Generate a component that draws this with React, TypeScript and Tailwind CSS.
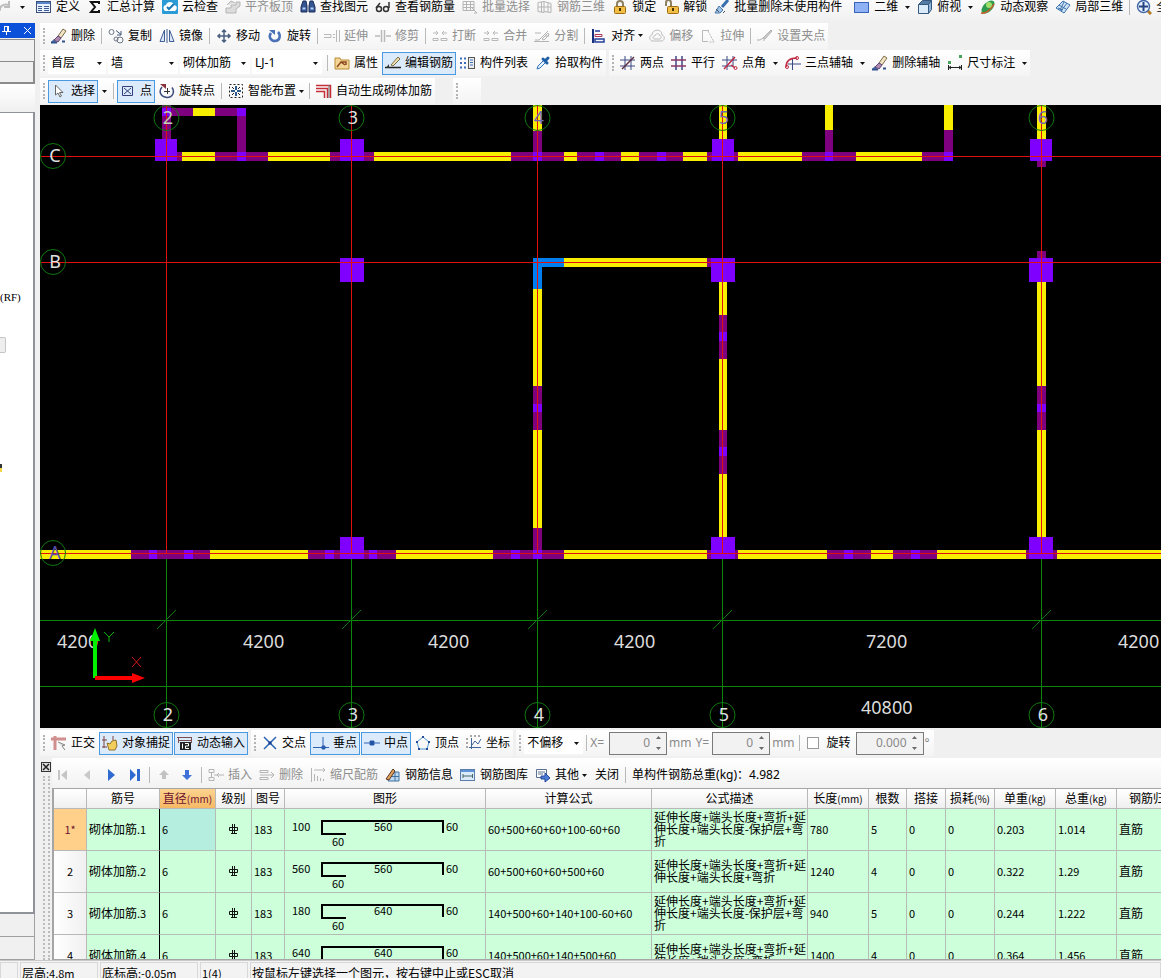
import type { ReactNode } from "react";

// 16x16 toolbar drawings
const icons: Record<string, ReactNode> = {
  redo: <path d="M0 12c-1-4 3-8 9-6M9 2v6h-5" fill="none" stroke="#bdbdbd" strokeWidth="2" />,
  define: (
    <g>
      <rect x="0.5" y="2.5" width="14" height="11" fill="#eaf3ff" stroke="#3c4f78" />
      <path d="M1 4h13" stroke="#5b86c8" strokeWidth="2" />
      <path d="M2 7.5h4M2 9.5h4M2 11.5h4M8 7.5h5M8 9.5h5M8 11.5h5" stroke="#3c5a94" />
    </g>
  ),
  sum: <path d="M12 5V3H4l4 5-4 5h8v-2" fill="none" stroke="#111" strokeWidth="2" />,
  cloudCheck: (
    <g>
      <rect width="16" height="15" rx="1" fill="#2a9bd4" />
      <path d="M3 12c-3-3-1-6 1-6 1-4 7-4 8 0 3 0 4 4 1 6z" fill="#fff" />
      <path d="M5 8l2 2 5-5" fill="none" stroke="#1879b5" strokeWidth="2" />
    </g>
  ),
  flush: <path d="M1 14V9h5v-3h5V3h4v4l-4 3v4zM2 6l4-4 4 2" fill="#dcdcdc" stroke="#b5b5b5" />,
  find: (
    <g fill="#35558f" stroke="#1b2f5c">
      <path d="M3 2h3l1 5v6H1V8zM10 2h3l2 6v5H9V7z" />
      <path d="M2.5 9.5h3M10.5 9.5h3" stroke="#b8d2ff" strokeWidth="2" />
    </g>
  ),
  glasses: (
    <g fill="none" stroke="#333" strokeWidth="1.5">
      <circle cx="4" cy="10" r="2.5" />
      <circle cx="11" cy="10" r="2.5" />
      <path d="M1 9l4-5M14 9V3" />
    </g>
  ),
  batch: <path d="M1 2.5h11v9H1zM1 5.5h11M1 8.5h11M4.5 2v10M8.5 2v10M9 8l6 6-3 0" fill="none" stroke="#b4b4b4" />,
  grid3d: <path d="M1 3.5l6-1v11l-6-1zM7 2.5l7 2v9l-7-1M1 8h13M4.5 3v10M11 4v9" fill="none" stroke="#b4b4b4" />,
  lock: (
    <g>
      <path d="M5 8V5c0-4 6-4 6 0v3" fill="none" stroke="#8d8060" strokeWidth="2" />
      <rect x="2.5" y="7.5" width="11" height="7" rx="1" fill="#f1bf45" stroke="#a06d13" />
      <path d="M8 9v3" stroke="#4a3100" strokeWidth="2" />
    </g>
  ),
  unlock: (
    <g>
      <path d="M3 7V4c0-4 5-4 5 0v4" fill="none" stroke="#8d8060" strokeWidth="2" />
      <rect x="4.5" y="7.5" width="11" height="7" rx="1" fill="#f1bf45" stroke="#a06d13" />
      <path d="M10 9v3" stroke="#4a3100" strokeWidth="2" />
    </g>
  ),
  broom: (
    <g>
      <path d="M14 1L8 8" stroke="#3a6fae" strokeWidth="3" />
      <path d="M5 7l4 4-3 3-5 0z" fill="#9fc4ea" stroke="#4c78a8" />
      <path d="M2 10l3 3M9 14l2-2" stroke="#4a545f" />
    </g>
  ),
  plane: <rect x="0.5" y="3.5" width="14" height="10" fill="#8fb2f5" stroke="#3763b8" />,
  cube: (
    <g stroke="#35587e">
      <path d="M1.5 5.5l4-4h9l-3 4z" fill="#557ba5" />
      <path d="M11.5 5.5l3-4v9l-3 4z" fill="#8fb4d9" />
      <path d="M1.5 5.5h10v9h-10z" fill="#d9eafa" />
    </g>
  ),
  orbit: (
    <g>
      <ellipse cx="8" cy="8" rx="8" ry="4.5" transform="rotate(-45 8 8)" fill="#2d9a4d" />
      <circle cx="9" cy="6" r="3" fill="#9fe06b" />
      <path d="M1 14c4 1 10-3 13-9" fill="none" stroke="#d05a2a" strokeWidth="1.5" />
    </g>
  ),
  part3d: (
    <g fill="#cfe4f7" stroke="#3b71a8">
      <path d="M1 9l7-7 7 4-6 8z" />
      <path d="M4 6l7 4M6 12l6-8M3 9l5 2M9 3l-4 8" fill="none" />
    </g>
  ),
  zoomAll: (
    <g>
      <path d="M11 11l4 4" stroke="#b57b25" strokeWidth="3" />
      <circle cx="7.5" cy="7.5" r="6" fill="#e6f1ff" stroke="#4268a8" strokeWidth="1.5" />
      <path d="M7.5 3v9M3 7.5h9" stroke="#24457f" strokeWidth="2" />
    </g>
  ),
  eraser: (
    <g>
      <path d="M0 14l3-3 2 3z" fill="#4f6fa8" />
      <path d="M0 14.5h6M11 13.500h3" stroke="#31508c" strokeWidth="2" />
      <path d="M7 8l5-7 3 2-5 7z" fill="#f0e4c4" stroke="#7c6b46" />
      <path d="M7 8l3 2-3 4-4-2z" fill="#b089b0" stroke="#5c4878" />
    </g>
  ),
  copy: (
    <g fill="none" stroke="#6d7785">
      <circle cx="3.5" cy="4" r="2.5" />
      <circle cx="12" cy="12" r="3" />
      <circle cx="8" cy="11" r="2" />
      <path d="M8 2.5l5 4M13 3v4h-4" stroke="#3e5575" />
    </g>
  ),
  mirror: (
    <g fill="#dce8f8" stroke="#3f5f96">
      <path d="M5.5 2v11.500H1zM10.500 2v11.500h4.500z" />
      <path d="M8 1v14" strokeWidth="1" />
    </g>
  ),
  move: <path d="M8 2v12M2 8h12M6 4l2-2 2 2M6 12l2 2 2-2M4 6L2 8l2 2M12 6l2 2-2 2" fill="none" stroke="#4a6080" strokeWidth="1.5" />,
  rotate: (
    <g>
      <path d="M4 5c-3 4 0 8 4 8 5 0 6-6 3-9" fill="none" stroke="#4a70b8" strokeWidth="2.5" />
      <path d="M2 2h6v5z" fill="#4a70b8" />
    </g>
  ),
  extend: <path d="M0 6.5h7v3H0M9 6.500h2M9 9.500h2M12.500 2v12M15.500 2v12" fill="none" stroke="#b9b9b9" />,
  trim: <path d="M0 8h5M6.500 2v12M9.500 2v12M11 8h5" fill="none" stroke="#b9b9b9" strokeWidth="1.5" />,
  breakAt: <path d="M1 5h5M4 3l2 2-2 2M15 5h-5M12 3l-2 2 2 2M1 10.500h5v2H1zM9 10.500h6v2H9z" fill="none" stroke="#b9b9b9" />,
  split: <path d="M1 12h4l9-9M1 5h6M0 13.500h15M11 8h4M8 11l6-6 1 2-5 5z" fill="none" stroke="#b4b4b4" />,
  align: (
    <g fill="none">
      <path d="M2 1v14" stroke="#17307c" strokeWidth="2" />
      <path d="M4 6.500h7v2H4z" stroke="#b03a5a" />
      <path d="M4 11h9v3H4zM4 3h5" stroke="#25409a" strokeWidth="1.5" />
    </g>
  ),
  offset: (
    <g fill="none" stroke="#bcbcbc">
      <path d="M3 13c-4-2-2-6 0-6 0-6 10-7 10 0 3 1 3 5 0 6z" />
      <path d="M5 11c-2-1-1-3 1-3 0-3 5-3 5 0 1 0 2 2 0 3z" />
    </g>
  ),
  stretch: (
    <g fill="none" stroke="#b9b9b9">
      <path d="M9 2.500H2.500v11H8" />
      <path d="M8 3l6 11H9" strokeDasharray="2 1" />
    </g>
  ),
  grip: <path d="M0 12h3M6 12h2M3 12l3-2M6 10l8-8 1 1-7 8z" fill="#ccc" stroke="#b0b0b0" />,
  prop: (
    <g>
      <path d="M1 3h5l1 2h8v9H1z" fill="#f4d797" stroke="#b98c35" />
      <path d="M3 12l4-5 4 3M7 7h5v3" fill="none" stroke="#8f4a21" strokeWidth="1.5" />
    </g>
  ),
  edit: (
    <g>
      <path d="M0 12.500h16" stroke="#222" strokeWidth="1.5" />
      <path d="M1 13l3-4v4" fill="#333" />
      <path d="M6 10l7-8 2 2-7 7z" fill="#f0e3b2" stroke="#7a6a42" />
    </g>
  ),
  list: (
    <g>
      <path d="M0 3.500h2M4 3.500h2M0 8h2M4 8h2M0 12.500h2M4 12.500h2" stroke="#3a6dbb" strokeWidth="2" />
      <rect x="8.5" y="2.5" width="6" height="11" fill="#eee" stroke="#555" />
      <path d="M10 5h3M10 7.500h3M10 10h3" stroke="#3a6dbb" />
    </g>
  ),
  pick: (
    <g>
      <path d="M2 14l1-3 6-6 2 2-6 6z" fill="#e6f3ff" stroke="#2f74ba" />
      <path d="M8 4l4 4M10 6l3-3" stroke="#1e5fa8" strokeWidth="3" strokeLinecap="round" />
    </g>
  ),
  twoPoint: (
    <g>
      <path d="M5 1v14M11 1v14M0 5h15M0 11h15" stroke="#3b4a86" />
      <path d="M2 14L14 2" stroke="#5d2f3c" strokeWidth="1.5" />
    </g>
  ),
  parallel: (
    <g>
      <path d="M5 1v14M11 1v14" stroke="#3b4a86" strokeWidth="1.5" />
      <path d="M0 5h15M0 11h15" stroke="#8e3566" strokeWidth="1.5" />
    </g>
  ),
  pointAngle: (
    <g>
      <path d="M5 1v14M11 1v10M0 5h15M0 11h11" stroke="#3b4a86" />
      <path d="M2 14L13 2M9 10l4 3" stroke="#c02a44" strokeWidth="1.5" />
      <circle cx="13.5" cy="13" r="1.5" fill="none" stroke="#c02a44" />
    </g>
  ),
  threePoint: (
    <g fill="none">
      <path d="M7.500 3v12M3 9h13" stroke="#3b4a86" />
      <path d="M1 12c0-6 4-9 11-9" stroke="#c02a44" strokeWidth="1.5" />
      <circle cx="2" cy="12" r="1.5" stroke="#c02a44" />
      <circle cx="12" cy="3" r="1.5" stroke="#c02a44" />
    </g>
  ),
  dimension: (
    <g>
      <path d="M1.500 10v5M14.500 10v5M2 12.500h12M4 11l-2 1.500 2 1.500M12 11l2 1.500-2 1.500" fill="none" stroke="#222" />
      <path d="M1 6h3v3H1zM12 0h3v3h-3z" fill="#4aa35a" />
    </g>
  ),
  cursor: <path d="M4.500 2v10l2.500-2 2 4 1.500-1-2-3.500H12z" fill="#fff" stroke="#666" />,
  point: <path d="M2.500 3.500h10v9h-10zM4 5l7 6M11 5l-7 6" fill="none" stroke="#31407a" />,
  rotatePoint: (
    <g fill="none">
      <path d="M3 4c-4 5-1 10 5 10.500 6 0 8-6 5-10" stroke="#3c4d7c" strokeWidth="1.5" />
      <path d="M8.500 5v6M5 8.500h6" stroke="#333" />
      <path d="M1 1h6v5z" fill="#8a3340" />
    </g>
  ),
  smart: (
    <g fill="none">
      <rect x="1.5" y="1.5" width="13" height="13" stroke="#222" strokeDasharray="2 2" />
      <path d="M8 3v4M8 9v4M3 8h4M9 8h4" stroke="#2d5c8d" strokeWidth="2" />
      <path d="M4 4l2 2M12 4l-2 2M4 12l2-2M12 12l-2-2" stroke="#222" />
    </g>
  ),
  autoRebar: (
    <g fill="none" stroke="#c42f38">
      <path d="M0 2.500h14.500V15M0 5.500h11.500V15M0 8.500h8.500V15" strokeWidth="1.5" />
      <path d="M13 2v13" stroke="#6e6e6e" />
    </g>
  ),
  ortho: (
    <g>
      <path d="M0 4h15M4 1v14" stroke="#d08e8e" strokeWidth="3" />
      <path d="M7 7l7 3-3 1 3 4" fill="#ddd" stroke="#888" />
    </g>
  ),
  snap: (
    <g>
      <path d="M2 1v12M0 5h5M11 1v4M0 12h5" stroke="#7c4040" />
      <path d="M5 8l3 1 2-3 4-1 1 6-2 4H7z" fill="#f2cf5c" stroke="#93702a" />
    </g>
  ),
  dynInput: (
    <g>
      <path d="M0 2.500h15M1.500 2v6M14.500 2v6M1 5.500h14" stroke="#7c4d4d" />
      <rect x="3" y="7" width="11" height="8" fill="#222" />
      <path d="M5.500 8.500v5M8 8.500h3.500V11H8.500v2.500H12" fill="none" stroke="#fff" />
    </g>
  ),
  cross: (
    <g>
      <path d="M2 2l12 12M14 2L2 14" stroke="#2b66b5" strokeWidth="1.5" />
      <rect x="6.5" y="6.5" width="3" height="3" fill="#173f8e" />
    </g>
  ),
  foot: <path d="M0 12.500h16M10 2v10M9 11h3v3H9z" fill="#173f8e" stroke="#2e62b5" />,
  mid: <path d="M0 8h16M6 6h4v4H6z" fill="#173f8e" stroke="#2e62b5" />,
  vertex: (
    <g>
      <path d="M8 2l6 5-2 7H4L2 7z" fill="none" stroke="#5596ce" />
      <path d="M7 1h2v2H7zM1 6h2v2H1zM13 6h2v2h-2zM3 13h2v2H3zM11 13h2v2h-2z" fill="#244c94" />
    </g>
  ),
  coord: (
    <g fill="none" stroke="#40659c">
      <path d="M5.500 3v11M3 12.500h12M6 10l3-4 3 3 3-5" />
      <path d="M1 3v10M4 1h12" strokeDasharray="2 2" stroke="#555" />
    </g>
  ),
  first: <path d="M3 3h2v10H3zM12 3v10L6 8z" fill="#c5c5c5" />,
  prev: <path d="M11 3v10L5 8z" fill="#c9c9c9" />,
  next: <path d="M5 2v12l7-6z" fill="#2f6ad0" />,
  last: <path d="M3 2v12l6-6zM10 2h3v12h-3z" fill="#2f6ad0" />,
  up: <path d="M8 3l5 5h-3v4H6V8H3z" fill="#c2c2c2" />,
  down: <path d="M8 13l5-5h-3V3H6v5H3z" fill="#3f72d8" />,
  insert: <path d="M1 2.500h5v3H1zM1 10.500h5v3H1zM9 8h7M11 6L9 8l2 2M3.500 6v4M6 8h3" fill="none" stroke="#b5b5b5" />,
  remove: <path d="M1 3.500h8v2H1zM1 10.500h8v2H1zM1 8h14M12 5l3 3-3 3" fill="none" stroke="#b5b5b5" />,
  scale: <path d="M1.500 1v14M4 3h11M13 1l2 2-2 2M4.500 7v7M7.500 9v5M10.500 11v3M13.500 12v2" fill="none" stroke="#b5b5b5" />,
  info: (
    <g>
      <path d="M6 5h8v9H3z" fill="#bcd8f2" stroke="#42729f" />
      <path d="M10 5v9M5 9.500h9" stroke="#42729f" />
      <path d="M1 12l7-10 2 2-6 9z" fill="#e3a05a" stroke="#5a3925" />
    </g>
  ),
  library: (
    <g>
      <rect x="0.5" y="2.5" width="14" height="11" fill="#dcebfa" stroke="#5b7dab" />
      <path d="M1 4h13" stroke="#5d92d6" strokeWidth="2" />
      <path d="M3 7v4M12.500 7v4M3 9h9" stroke="#446666" />
    </g>
  ),
  other: (
    <g>
      <path d="M1.500 2.500h10v8h-10zM3 5h7M3 7h5" fill="#fff" stroke="#5a7195" />
      <path d="M6 9h4V6l5 5-5 4v-3H6z" fill="#4b7bd6" stroke="#24479a" />
    </g>
  ),
};

function Icon({ name }: { name: string }) {
  return (
    <svg viewBox="0 0 16 16" className="size-4 shrink-0" aria-hidden="true">
      {icons[name]}
    </svg>
  );
}

function Caret() {
  return (
    <svg viewBox="0 0 5 3" className="h-[3px] w-[5px] shrink-0" aria-hidden="true">
      <path d="M0 0h5L2.500 3z" fill="#111" />
    </svg>
  );
}

type ToolProps = { icon?: string; label?: string; title?: string; off?: boolean; active?: boolean; menu?: boolean; split?: boolean };

function Tool({ icon, label, title, off, active, menu, split }: ToolProps) {
  const box = active ? "border-[#4a98e0] bg-[#dcebfb]" : "border-transparent";
  return (
    <div className="flex shrink-0 items-center">
      <button disabled={off} title={title} aria-label={label ?? title} className={"flex h-[23px] items-center gap-1 border px-[2px] " + box}>
        {icon && <Icon name={icon} />}
        {label && <span className={off ? "text-[#8f8f8f]" : ""}>{label}</span>}
      </button>
      {menu && <Caret />}
      {split && (
        <button className="flex h-4 items-center pr-[3px] pl-1" aria-label={label + "选项"}>
          <Caret />
        </button>
      )}
    </div>
  );
}

function Bar({ children }: { children?: ReactNode }) {
  return (
    <div role="toolbar" className="flex h-[26px] shrink-0 items-center gap-px bg-linear-to-b from-white to-[#f4f4f4]">
      <span className="flex h-4 w-[7px] shrink-0 justify-center">
        <span className="border-l-2 border-dotted border-[#b4b4b4]" />
      </span>
      {children}
    </div>
  );
}

function Sep() {
  return <span className="mx-[2px] h-4 w-px shrink-0 bg-[#b9b9b9]" />;
}

function Combo({ value, label, width }: { value: string; label: string; width: string }) {
  return (
    <div className={"relative flex h-[22px] shrink-0 items-center bg-white " + width}>
      <select aria-label={label} className="h-full w-full appearance-none pl-[3px] leading-4 outline-none">
        <option>{value}</option>
      </select>
      <span className="pointer-events-none absolute right-1 flex">
        <Caret />
      </span>
    </div>
  );
}

function Spin({ label, value, width }: { label: string; value: string; width: string }) {
  return (
    <div className={"flex h-[23px] shrink-0 border border-[#7a7a7a] bg-[#f2f2f2] text-[#8a8a8a] " + width}>
      <input aria-label={label} defaultValue={value} className="w-full min-w-0 text-right outline-none" />
      <div className="flex w-4 shrink-0 flex-col items-center justify-around">
        <button aria-label="增加" className="rotate-180 opacity-60">
          <Caret />
        </button>
        <button aria-label="减少" className="opacity-60">
          <Caret />
        </button>
      </div>
    </div>
  );
}

const Y = "#f7ee00";
const P = "#7f007f";
const V = "#7f00ff";
const B = "#0080f0";

// wall pieces: x, y, width, height, colour
const walls: [number, number, number, number, string][] = [
  [162, 105, 9, 47, P], [162, 108, 9, 8, V], [171, 108, 22, 8, P], [193, 108, 22, 8, Y], [215, 108, 22, 8, P], [237, 116, 9, 36, P], [237, 108, 9, 8, V],
  [177, 152, 5, 9, P], [182, 152, 33, 9, Y], [215, 152, 53, 9, P], [237, 152, 9, 9, V], [268, 152, 62, 9, Y], [330, 152, 44, 9, P], [374, 152, 137, 9, Y],
  [511, 152, 53, 9, P], [564, 152, 13, 9, Y], [577, 152, 44, 9, P], [595, 152, 9, 9, V], [621, 152, 18, 9, Y], [639, 152, 44, 9, P], [657, 152, 9, 9, V],
  [683, 152, 24, 9, Y], [707, 152, 31, 9, P], [738, 152, 64, 9, Y], [802, 152, 54, 9, P], [856, 152, 66, 9, Y], [922, 152, 22, 9, P], [944, 152, 9, 9, V],
  [533, 105, 9, 26, Y], [533, 131, 9, 21, P], [533, 152, 9, 9, V], [719, 105, 8, 34, Y], [825, 105, 8, 25, Y], [825, 130, 8, 22, P], [825, 152, 8, 9, V],
  [944, 105, 9, 25, Y], [944, 130, 9, 22, P], [1037, 105, 9, 34, Y], [1037, 161, 9, 6, P],
  [533, 258, 9, 31, B], [542, 258, 22, 9, B], [564, 258, 143, 9, Y], [707, 258, 4, 9, P],
  [533, 289, 9, 97, Y], [533, 386, 9, 44, P], [533, 404, 9, 8, V], [533, 430, 9, 98, Y], [533, 528, 9, 22, P],
  [719, 282, 8, 33, Y], [719, 315, 8, 44, P], [719, 332, 8, 9, V], [719, 359, 8, 71, Y], [719, 430, 8, 44, P], [719, 447, 8, 9, V], [719, 474, 8, 63, Y],
  [1037, 251, 9, 7, P], [1037, 282, 9, 104, Y], [1037, 386, 9, 44, P], [1037, 404, 9, 8, V], [1037, 430, 9, 107, Y],
  [40, 550, 91, 9, Y], [131, 550, 79, 9, P], [149, 550, 8, 9, V], [184, 550, 9, 9, V], [210, 550, 98, 9, Y], [308, 550, 88, 9, P], [325, 550, 9, 9, V], [369, 550, 8, 9, V],
  [396, 550, 97, 9, Y], [493, 550, 71, 9, P], [511, 550, 9, 9, V], [533, 550, 9, 9, V], [564, 550, 143, 9, Y], [707, 550, 31, 9, P], [738, 550, 89, 9, Y],
  [827, 550, 44, 9, P], [844, 550, 9, 9, V], [871, 550, 22, 9, Y], [893, 550, 44, 9, P], [911, 550, 9, 9, V], [937, 550, 89, 9, Y], [1026, 550, 31, 9, P], [1057, 550, 104, 9, Y],
  // columns
  [155, 139, 22, 22, V], [340, 139, 24, 22, V], [712, 139, 22, 22, V], [1030, 139, 22, 22, V],
  [340, 258, 24, 24, V], [711, 258, 24, 24, V], [1029, 258, 24, 24, V],
  [340, 537, 24, 22, V], [711, 537, 24, 22, V], [1029, 537, 24, 22, V],
];

const axes = [
  { n: "2", x: 166, top: "#b9d3b9" },
  { n: "3", x: 351, top: "#e0e0e0" },
  { n: "4", x: 537, top: "#6a66b8" },
  { n: "5", x: 722, top: "#6a66b8" },
  { n: "6", x: 1041, top: "#6a66b8" },
];
const rowAxes = [
  { n: "C", y: 156, c: "#e0e0e0" },
  { n: "B", y: 262, c: "#e0e0e0" },
  { n: "A", y: 553, c: "#5b4fae" },
];
const dims: [string, number, number][] = [
  ["4200", 57, 648], ["4200", 243, 648], ["4200", 428, 648], ["4200", 614, 648], ["7200", 866, 648], ["4200", 1118, 648], ["40800", 861, 714],
];

function Plan() {
  return (
    <svg className="h-full w-full font-['Noto_Sans',sans-serif] text-[18px]" aria-label="平面图">
      <g transform="translate(-40 -105)">
        {walls.map(([x, y, w, h, c], i) => (
          <rect key={i} x={x} y={y} width={w} height={h} fill={c} shapeRendering="crispEdges" />
        ))}
        {/* grid lines */}
        <g shapeRendering="crispEdges">
          {axes.map((a) => (
            <g key={a.n}>
              <rect x={a.x} y="105" width="1" height="449" fill="#e01010" />
              <rect x={a.x} y="559" width="1" height="169" fill="#0b860b" />
            </g>
          ))}
          {rowAxes.map((a) => (
            <rect key={a.n} x="40" y={a.y} width="3000" height="1" fill="#e01010" />
          ))}
          <rect x="40" y="620" width="3000" height="1" fill="#0b860b" />
          <rect x="40" y="686" width="3000" height="1" fill="#0b860b" />
        </g>
        {axes.map((a) => (
          <g key={a.n} fill="none" stroke="#0f780f">
            <path d={`M${a.x - 9} 629l19-19`} />
            <circle cx={a.x + 0.5} cy="118" r="12.5" />
            <circle cx={a.x + 0.5} cy="715" r="12.5" />
          </g>
        ))}
        {rowAxes.map((a) => (
          <circle key={a.n} cx="53" cy={a.y} r="12.5" fill="none" stroke="#0f780f" />
        ))}
        <g textAnchor="middle">
          {axes.map((a) => (
            <g key={a.n}>
              <text x={a.x + 2} y="124" fill={a.top}>{a.n}</text>
              <text x={a.x + 2} y="721" fill="#e0e0e0">{a.n}</text>
            </g>
          ))}
          {rowAxes.map((a) => (
            <text key={a.n} x="55" y={a.y + 6} fill={a.c}>{a.n}</text>
          ))}
        </g>
        {dims.map(([t, x, y], i) => (
          <text key={i} x={x} y={y} fill="#dcdcdc">{t}</text>
        ))}
        <path d="M93 678V641h-3l5-13 5 13h-3v37z" fill="#00f000" />
        <path d="M95 676h37v-3l13 5-13 5v-3H95z" fill="#f00" />
        <path d="M104 632l5 5 5-5M109 637v5" fill="none" stroke="#0fb50f" />
        <path d="M132 657l9 10M141 657l-9 10" fill="none" stroke="#d01818" />
      </g>
    </svg>
  );
}

const columns = [
  { name: "", unit: "", w: "w-[33px]" },
  { name: "筋号", unit: "", w: "w-[73px]" },
  { name: "直径", unit: "(mm)", w: "w-[56px]" },
  { name: "级别", unit: "", w: "w-[36px]" },
  { name: "图号", unit: "", w: "w-[33px]" },
  { name: "图形", unit: "", w: "w-[201px]" },
  { name: "计算公式", unit: "", w: "w-[166px]" },
  { name: "公式描述", unit: "", w: "w-[156px]" },
  { name: "长度", unit: "(mm)", w: "w-[61px]" },
  { name: "根数", unit: "", w: "w-[38px]" },
  { name: "搭接", unit: "", w: "w-[39px]" },
  { name: "损耗", unit: "(%)", w: "w-[49px]" },
  { name: "单重", unit: "(kg)", w: "w-[61px]" },
  { name: "总重", unit: "(kg)", w: "w-[61px]" },
  { name: "钢筋归类", unit: "", w: "w-[73px]" },
];

const longDesc = ["延伸长度+端头长度+弯折+延", "伸长度+端头长度-保护层+弯", "折"];
const shortDesc = ["延伸长度+端头长度+弯折+延", "伸长度+端头长度+弯折"];

const bars = [
  { id: "1*", left: "100", mid: "560", formula: "60+500+60+60+100-60+60", desc: longDesc, nums: ["780", "5", "0", "0", "0.203", "1.014"] },
  { id: "2", left: "560", mid: "560", formula: "60+500+60+60+500+60", desc: shortDesc, nums: ["1240", "4", "0", "0", "0.322", "1.29"] },
  { id: "3", left: "180", mid: "640", formula: "140+500+60+140+100-60+60", desc: longDesc, nums: ["940", "5", "0", "0", "0.244", "1.222"] },
  { id: "4", left: "640", mid: "640", formula: "140+500+60+140+500+60", desc: shortDesc, nums: ["1400", "4", "0", "0", "0.364", "1.456"] },
];

function BarShape({ left, mid }: { left: string; mid: string }) {
  return (
    <svg className="block h-[41px] w-[200px]" aria-label="钢筋图形">
      <path d="M61 25H37V12H158V24" fill="none" stroke="#000" strokeWidth="2" />
      <text x="7" y="22">{left}</text>
      <text x="89" y="22">{mid}</text>
      <text x="161" y="22">60</text>
      <text x="47" y="37">60</text>
    </svg>
  );
}

function BarTable() {
  const line = "border-r border-b border-[#b3bdb5] ";
  const cell = line + "px-[2px] pt-0 pb-[2px]";
  return (
    <table className="w-[1136px] table-fixed border-separate border-spacing-0 bg-[#ccffda] font-['Noto_Sans_CJK_SC',sans-serif] text-[11px] leading-3">
      <thead>
        <tr className="h-5 bg-linear-to-b from-white to-[#eeeeee] text-xs leading-4">
          {columns.map((c) => (
            <th
              key={c.name}
              className={
                "border-r border-b border-[#b8b8b8] p-0 font-normal whitespace-nowrap " + c.w + (c.name === "直径" ? " bg-linear-to-b from-[#fbd38f] to-[#f5b964] text-[#6b1030]" : "")
              }
            >
              {c.name}
              <span className="text-[10px]">{c.unit}</span>
            </th>
          ))}
        </tr>
      </thead>
      <tbody>
        {bars.map((b, i) => (
          <tr key={b.id} className="h-[42px]">
            <th className={"border-r border-b border-[#b8b8b8] p-0 pb-[2px] font-normal " + (i === 0 ? "bg-[#ffd08a] text-[#6b1030]" : "bg-linear-to-r from-white to-[#f0f0f0]")}>{b.id}</th>
            <td className={cell + " border-r-black text-xs whitespace-nowrap"}>
              砌体加筋<span className="text-[11px]">.{i + 1}</span>
            </td>
            <td className={cell + (i === 0 ? " bg-[#b5eede]" : "")}>6</td>
            <td className={cell}>
              <svg className="mx-auto size-[10px]" viewBox="0 0 10 10" aria-label="三级钢">
                <path d="M0.500 3.500h8v3h-8zM3.500 0v9M5.500 0v9M2 9.500h6" fill="none" stroke="#111" />
              </svg>
            </td>
            <td className={cell}>183</td>
            <td className={line + "p-0"}>
              <BarShape left={b.left} mid={b.mid} />
            </td>
            <td className={cell}>{b.formula}</td>
            <td className={cell + " overflow-hidden text-xs leading-3 whitespace-nowrap"}>
              {b.desc.map((d) => (
                <div key={d}>{d}</div>
              ))}
            </td>
            {b.nums.map((n, k) => (
              <td key={k} className={cell}>{n}</td>
            ))}
            <td className={cell + " text-xs"}>直筋</td>
          </tr>
        ))}
      </tbody>
    </table>
  );
}

function SidePanel() {
  return (
    <aside className="flex w-[35px] shrink-0 flex-col overflow-hidden pt-px">
      <div className="flex h-[15px] shrink-0 items-center justify-end gap-3 bg-[#0a50d8] pr-[3px]">
        <button aria-label="固定">
          <svg viewBox="0 0 9 9" className="size-[9px]">
            <path d="M2 .500h4M2.500 0v5M5.500 0v5M6.500 0v5M0 5.500h9M4.500 5v4" fill="none" stroke="#fff" />
          </svg>
        </button>
        <button aria-label="关闭面板">
          <svg viewBox="0 0 9 9" className="size-[9px]">
            <path d="M1 1l7 7M8 1L1 8" stroke="#fff" />
          </svg>
        </button>
      </div>
      <div className="mt-px h-[22px] shrink-0 border-t border-r border-[#8c8c8c] bg-[#f0f0f0]" />
      <div className="h-[23px] shrink-0 border-t border-r-2 border-b-2 border-[#8c8c8c] bg-[#f0f0f0]" />
      <div className="h-7 shrink-0 bg-linear-to-b from-white to-[#f0f0f0]" />
      <div className="flex-1 overflow-hidden border-t border-r-2 border-b-2 border-[#8f9399] bg-white pt-[176px] font-['Liberation_Serif',serif] text-[11px]">
        <p className="leading-4">(RF)</p>
        <div className="mt-8 h-4 w-[6px] rounded-r-xs border border-l-0 border-[#c4c4c4] bg-[#eeeeee]" />
        <div className="mt-[111px] h-2 w-[2px] border-t-4 border-[#333] bg-[#f2d64a]" />
      </div>
      <div className="h-[23px] shrink-0 border-r border-b border-[#a0a0a0]" />
      <div className="h-[23px] shrink-0 border-r border-b border-[#a0a0a0]" />
    </aside>
  );
}

export default function App() {
  return (
    <div className="flex h-screen flex-col overflow-hidden bg-[#f0f0f0] font-['Noto_Sans','Noto_Sans_CJK_SC',sans-serif] text-xs leading-4 whitespace-nowrap text-black">
      <header className="flex h-[22px] shrink-0 items-start overflow-hidden bg-linear-to-b from-[#fafafa] to-[#f0f0f0]">
        <div className="flex h-[14px] items-center gap-px">
          <div className="flex w-8 items-center gap-1">
            <Icon name="redo" />
            <Caret />
          </div>
          <Tool icon="define" label="定义" />
          <Tool icon="sum" label="汇总计算" />
          <Tool icon="cloudCheck" label="云检查" />
          <Tool icon="flush" label="平齐板顶" off />
          <Tool icon="find" label="查找图元" />
          <Tool icon="glasses" label="查看钢筋量" />
          <Tool icon="batch" label="批量选择" off />
          <Tool icon="grid3d" label="钢筋三维" off />
          <Tool icon="lock" label="锁定" />
          <Tool icon="unlock" label="解锁" />
          <Tool icon="broom" label="批量删除未使用构件" />
          <span className="w-1" />
          <Tool icon="plane" label="二维" split />
          <Tool icon="cube" label="俯视" split />
          <Tool icon="orbit" label="动态观察" />
          <Tool icon="part3d" label="局部三维" />
          <Sep />
          <Tool icon="zoomAll" label="全屏" />
        </div>
      </header>

      <div className="flex min-h-0 flex-1">
        <SidePanel />
        <main className="ml-[5px] flex min-w-0 flex-1 flex-col">
          <div className="flex h-[27px] shrink-0 items-center">
            <Bar>
              <Tool icon="eraser" label="删除" />
              <Sep />
              <Tool icon="copy" label="复制" />
              <Tool icon="mirror" label="镜像" />
              <Sep />
              <Tool icon="move" label="移动" />
              <Tool icon="rotate" label="旋转" />
              <Sep />
              <Tool icon="extend" label="延伸" off />
              <Tool icon="trim" label="修剪" off />
              <Sep />
              <Tool icon="breakAt" label="打断" off />
              <Tool icon="breakAt" label="合并" off />
              <Tool icon="split" label="分割" off />
              <Sep />
              <Tool icon="align" label="对齐" menu />
              <span className="w-px" />
              <Tool icon="offset" label="偏移" off />
              <Tool icon="stretch" label="拉伸" off />
              <Sep />
              <Tool icon="grip" label="设置夹点" off />
            </Bar>
          </div>
          <div className="flex h-7 shrink-0 items-center gap-[3px]">
            <Bar>
              <div className="flex gap-[2px]">
                <Combo label="楼层" value="首层" width="w-[58px]" />
                <Combo label="构件类型" value="墙" width="w-[70px]" />
                <Combo label="构件" value="砌体加筋" width="w-[70px]" />
                <Combo label="名称" value="LJ-1" width="w-[70px]" />
              </div>
              <span className="w-px" />
              <Sep />
              <Tool icon="prop" label="属性" />
              <Tool icon="edit" label="编辑钢筋" active />
              <Tool icon="list" label="构件列表" />
              <Tool icon="pick" label="拾取构件" />
            </Bar>
            <Bar>
              <Tool icon="twoPoint" label="两点" />
              <Tool icon="parallel" label="平行" />
              <Tool icon="pointAngle" label="点角" split />
              <Tool icon="threePoint" label="三点辅轴" split />
              <Tool icon="eraser" label="删除辅轴" />
              <Tool icon="dimension" label="尺寸标注" split />
            </Bar>
          </div>
          <div className="flex h-7 shrink-0 items-center gap-[18px]">
            <Bar>
              <Tool icon="cursor" label="选择" active split />
              <Sep />
              <Tool icon="point" label="点" active />
              <Tool icon="rotatePoint" label="旋转点" />
              <Sep />
              <Tool icon="smart" label="智能布置" menu />
              <span className="w-px" />
              <Sep />
              <Tool icon="autoRebar" label="自动生成砌体加筋" />
            </Bar>
            <Bar>
              <span className="w-5" />
            </Bar>
          </div>

          <div className="min-h-0 flex-1 overflow-hidden bg-black">
            <Plan />
          </div>

          <div className="flex h-[30px] shrink-0 items-center gap-[3px]">
            <Bar>
              <Tool icon="ortho" label="正交" />
              <Tool icon="snap" label="对象捕捉" active />
              <Tool icon="dynInput" label="动态输入" active />
            </Bar>
            <Bar>
              <Tool icon="cross" label="交点" />
              <Tool icon="foot" label="垂点" active />
              <Tool icon="mid" label="中点" active />
              <Tool icon="vertex" label="顶点" />
              <Tool icon="coord" label="坐标" />
            </Bar>
            <Bar>
              <Combo label="偏移方式" value="不偏移" width="w-[59px]" />
              <Sep />
              <span className="pr-1 text-[#8a8a8a]">X=</span>
              <Spin label="X偏移" value="0" width="w-[58px]" />
              <span className="px-px text-[#8a8a8a]">mm</span>
              <span className="px-[2px] text-[#8a8a8a]">Y=</span>
              <Spin label="Y偏移" value="0" width="w-[58px]" />
              <span className="px-px text-[#8a8a8a]">mm</span>
              <Sep />
              <label className="flex items-center gap-2 px-1">
                <input type="checkbox" className="size-3 appearance-none border border-[#9a9a9a] bg-white" />
                旋转
              </label>
              <Spin label="旋转角度" value="0.000" width="w-[68px]" />
              <span className="pr-1 text-[#8a8a8a]">°</span>
            </Bar>
          </div>

          <section className="flex h-[202px] shrink-0">
            <div className="flex w-3 shrink-0 flex-col items-center gap-1 pt-1">
              <button aria-label="关闭表格" className="flex size-[10px] items-center justify-center border border-[#333] bg-[#ddd]">
                <svg viewBox="0 0 8 8" className="size-2">
                  <path d="M1 1l6 6M7 1L1 7" stroke="#222" strokeWidth="1.5" />
                </svg>
              </button>
              <div className="flex flex-1 gap-[3px]">
                <span className="border-l-2 border-dotted border-[#bcbcbc]" />
                <span className="border-l-2 border-dotted border-[#bcbcbc]" />
              </div>
            </div>
            <div className="flex min-w-0 flex-1 flex-col">
              <div className="flex h-[30px] shrink-0 items-center gap-px bg-linear-to-b from-white to-[#f2f2f2] pt-1">
                <div className="flex gap-[2px]">
                  <Tool icon="first" title="首行" off />
                  <Tool icon="prev" title="上一行" off />
                  <Tool icon="next" title="下一行" />
                  <Tool icon="last" title="末行" />
                </div>
                <Sep />
                <Tool icon="up" title="上移" off />
                <Tool icon="down" title="下移" />
                <Sep />
                <Tool icon="insert" label="插入" off />
                <Tool icon="remove" label="删除" off />
                <Tool icon="scale" label="缩尺配筋" off />
                <Tool icon="info" label="钢筋信息" />
                <Tool icon="library" label="钢筋图库" />
                <Tool icon="other" label="其他" menu />
                <span className="w-[3px]" />
                <Tool label="关闭" />
                <Sep />
                <span className="px-[3px]">单构件钢筋总重(kg)：4.982</span>
              </div>
              <div className="min-h-0 flex-1 overflow-hidden border-t border-b border-l-2 border-[#a5a5a5]">
                <BarTable />
              </div>
            </div>
          </section>
        </main>
      </div>

      <footer className="flex h-[18px] shrink-0 gap-[2px] overflow-hidden border-t border-[#c8c8c8] bg-[#f3f3f3] pt-px font-['Noto_Sans_CJK_SC',sans-serif] text-[11px] leading-5 *:h-6 *:shrink-0 *:border *:border-[#d8d8d8]">
        <div className="w-[18px]" />
        <div className="w-[78px] px-px">
          <span className="text-xs leading-5">层高</span>:4.8m
        </div>
        <div className="w-[98px] px-px">
          <span className="text-xs leading-5">底标高</span>:-0.05m
        </div>
        <div className="w-[48px] px-px">1(4)</div>
        <div className="flex-1 px-px text-xs leading-5">按鼠标左键选择一个图元，按右键中止或ESC取消</div>
      </footer>
    </div>
  );
}
